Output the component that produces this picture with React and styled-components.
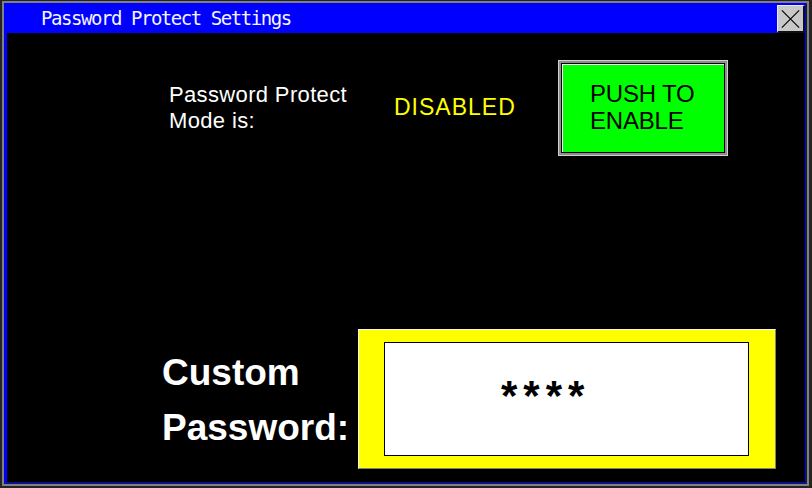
import React from "react";
import styled, { createGlobalStyle } from "styled-components";

const GlobalStyle = createGlobalStyle`
  html, body {
    margin: 0;
    padding: 0;
    background: #242424;
  }
  #root {
    width: 812px;
    height: 488px;
    overflow: hidden;
  }
`;

function CloseIcon() {
  return (
    <svg width="26" height="26" viewBox="0 0 26 26">
      <path d="M4 4 L22 22 M22 4 L4 22" stroke="#000" strokeWidth="1.2" />
    </svg>
  );
}

function App() {
  return (
    <>
      <GlobalStyle />
      <Frame>
        <Window>
          <TitleBar>
            <Title>Password Protect Settings</Title>
            <CloseButton aria-label="close">
              <CloseIcon />
            </CloseButton>
          </TitleBar>

          <Content>
            <TopRow>
              <ModeLabel>
                Password Protect
                <br />
                Mode is:
              </ModeLabel>
              <Status>DISABLED</Status>
              <PushFrame>
                <PushFace>
                  PUSH TO
                  <br />
                  ENABLE
                </PushFace>
              </PushFrame>
            </TopRow>

            <BottomRow>
              <BigLabel>
                Custom
                <br />
                Password:
              </BigLabel>
              <YellowBox>
                <PasswordField>****</PasswordField>
              </YellowBox>
            </BottomRow>
          </Content>
        </Window>
      </Frame>
    </>
  );
}

const Frame = styled.div`
  box-sizing: border-box;
  margin: 1px 0 0 2px;
  width: 807px;
  height: 485px;
  border: 2px solid #808080;
  background: #1c1c1c;
`;

const Window = styled.div`
  box-sizing: border-box;
  width: 802px;
  height: 480px;
  display: flex;
  flex-direction: column;
  background: #000;
  border-left: 3px solid #0000ff;
  border-right: 1px solid #0000ff;
  border-bottom: 1px solid #0000ff;
`;

const TitleBar = styled.div`
  height: 30px;
  flex: none;
  display: flex;
  align-items: flex-start;
  justify-content: space-between;
  background: #0000ff;
`;

const Title = styled.div`
  padding: 1px 0 0 34px;
  font-family: "DejaVu Sans Mono", monospace;
  font-size: 19px;
  letter-spacing: -1.45px;
  line-height: 29px;
  color: #f4f4ff;
`;

const CloseButton = styled.div`
  box-sizing: border-box;
  margin: 2px 0 0 0;
  width: 28px;
  height: 28px;
  display: flex;
  align-items: center;
  justify-content: center;
  background: #c8c8c8;
  border-top: 1px solid #ececec;
  border-left: 1px solid #ececec;
  border-right: 2px solid #101010;
  border-bottom: 2px solid #101010;
`;

const Content = styled.div`
  flex: 1;
  display: flex;
  flex-direction: column;
  justify-content: space-between;
  padding: 27px 0 13px;
`;

const TopRow = styled.div`
  display: flex;
  align-items: flex-start;
  padding-left: 162px;
`;

const ModeLabel = styled.div`
  width: 225px;
  margin-top: 22px;
  font-family: "Liberation Sans", Arial, sans-serif;
  font-size: 22px;
  letter-spacing: 0.35px;
  line-height: 26px;
  color: #fff;
`;

const Status = styled.div`
  width: 164px;
  margin-top: 34px;
  font-family: "Liberation Sans", Arial, sans-serif;
  font-size: 23px;
  letter-spacing: 1px;
  line-height: 26px;
  color: #ffff00;
`;

const PushFrame = styled.div`
  box-sizing: border-box;
  width: 170px;
  height: 96px;
  display: flex;
  padding: 2px;
  background: #8c8c8c;
  border: 1px solid #cfcfcf;
`;

const PushFace = styled.div`
  flex: 1;
  padding: 16px 0 0 28px;
  background: #00ff00;
  border: 1px solid #000;
  box-shadow: inset 1px 1px 0 #fff;
  font-family: "Liberation Sans", Arial, sans-serif;
  font-size: 24px;
  letter-spacing: -0.2px;
  line-height: 27px;
  color: #000;
`;

const BottomRow = styled.div`
  display: flex;
  align-items: flex-start;
  padding-left: 155px;
`;

const BigLabel = styled.div`
  width: 196px;
  margin-top: 16px;
  font-family: "Liberation Sans", Arial, sans-serif;
  font-weight: bold;
  font-size: 37px;
  line-height: 55px;
  color: #fff;
`;

const YellowBox = styled.div`
  box-sizing: border-box;
  width: 418px;
  height: 140px;
  padding: 12px 0 0 25px;
  background: #ffff00;
  border-top: 1px solid #f4f4f4;
  border-left: 1px solid #f4f4f4;
  border-right: 1px solid #808080;
  border-bottom: 1px solid #808080;
`;

const PasswordField = styled.div`
  box-sizing: border-box;
  width: 365px;
  height: 114px;
  padding: 32px 0 0 116px;
  background: #fff;
  border: 1px solid #000;
  font-family: "Liberation Sans", Arial, sans-serif;
  font-weight: bold;
  font-size: 42px;
  letter-spacing: 6px;
  line-height: 42px;
  color: #000;
`;

export default App;
